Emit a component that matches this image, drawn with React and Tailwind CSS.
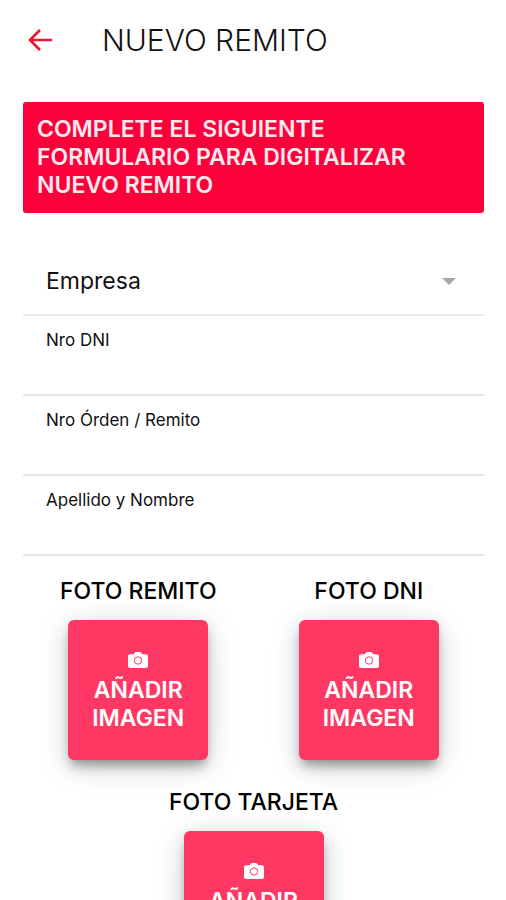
import { useState } from "react";

const fields = [
  { id: "dni", label: "Nro DNI" },
  { id: "orden", label: "Nro Órden / Remito" },
  { id: "nombre", label: "Apellido y Nombre" },
];

const photos = [
  { id: "remito", title: "FOTO REMITO" },
  { id: "foto-dni", title: "FOTO DNI" },
  { id: "tarjeta", title: "FOTO TARJETA" },
];

function ArrowBack() {
  return (
    <svg viewBox="0 0 24 22" className="h-[22px] w-6" fill="none" stroke="#f3122f" strokeWidth="2.6" aria-hidden="true">
      <path d="M12 1 2 11l10 10M2 11h22" />
    </svg>
  );
}

function Camera() {
  return (
    <svg viewBox="0 0 20 16" className="h-4 w-5" fill="none" aria-hidden="true">
      <path
        fill="currentColor"
        d="M2 2.2h3.6L7 .6Q7.500 0 8.200 0h3.600Q12.500 0 13 .6l1.400 1.600H18a2 2 0 0 1 2 2V14a2 2 0 0 1-2 2H2a2 2 0 0 1-2-2V4.200a2 2 0 0 1 2-2Z"
      />
      <circle cx="10" cy="8.500" r="3.700" stroke="#ff3863" strokeWidth="1" />
    </svg>
  );
}

function PhotoField({ id, title }) {
  return (
    <section className="flex w-1/2 flex-col items-center">
      <h2 id={id} className="text-[23px] leading-7 font-medium text-black">{title}</h2>
      <button
        type="button"
        aria-describedby={id}
        className="mt-[15px] mb-7 flex size-[140px] flex-col items-center justify-center rounded-md bg-[#ff3863] text-[23px] leading-7 font-semibold text-white shadow-[0_8px_12px_-3px_rgba(0,0,0,0.38),0_6px_30px_rgba(0,0,0,0.18)]"
      >
        <span className="flex h-7 items-center pb-1"><Camera /></span>
        <span>AÑADIR</span>
        <span>IMAGEN</span>
      </button>
    </section>
  );
}

export default function App() {
  const [company, setCompany] = useState("");
  return (
    <div className="h-screen overflow-y-auto bg-white font-['Inter',sans-serif] text-[#111] [scrollbar-width:none]">
      <header className="flex h-20 items-center px-7">
        <button type="button" aria-label="Volver" className="flex"><ArrowBack /></button>
        <h1 className="ml-[50px] text-[30px] leading-9 font-light">NUEVO REMITO</h1>
      </header>
      <main className="pt-[22px] pr-[22px] pl-[23px]">
        <p className="rounded-[3px] bg-[#fc003c] px-[14px] pt-[13px] pb-[14px] text-[23px] leading-7 font-semibold text-[#ffeaee]">
          COMPLETE EL SIGUIENTE FORMULARIO PARA DIGITALIZAR NUEVO REMITO
        </p>
        <form className="mt-9">
          <div className="relative flex h-[67px] items-center border-b-2 border-[#ebebeb]">
            <select
              aria-label="Empresa"
              value={company}
              onChange={(e) => setCompany(e.target.value)}
              className="h-full w-full appearance-none bg-transparent px-[23px] text-[23px] outline-none"
            >
              <option value="">Empresa</option>
            </select>
            <svg viewBox="0 0 14 7" className="pointer-events-none absolute right-7 h-[7px] w-[14px]" fill="#a6a6a6" aria-hidden="true">
              <path d="M0 0h14L7 7Z" />
            </svg>
          </div>
          {fields.map((f) => (
            <div key={f.id} className="flex h-20 flex-col border-b-2 border-[#e6e6e6] px-[23px] pt-3">
              <label htmlFor={f.id} className="text-[17px] leading-6">{f.label}</label>
              <input id={f.id} type="text" className="w-full flex-1 bg-transparent text-[17px] outline-none" />
            </div>
          ))}
          <div className="mt-[21px] flex flex-wrap justify-center">
            {photos.map((p) => (
              <PhotoField key={p.id} id={p.id} title={p.title} />
            ))}
          </div>
        </form>
      </main>
    </div>
  );
}
